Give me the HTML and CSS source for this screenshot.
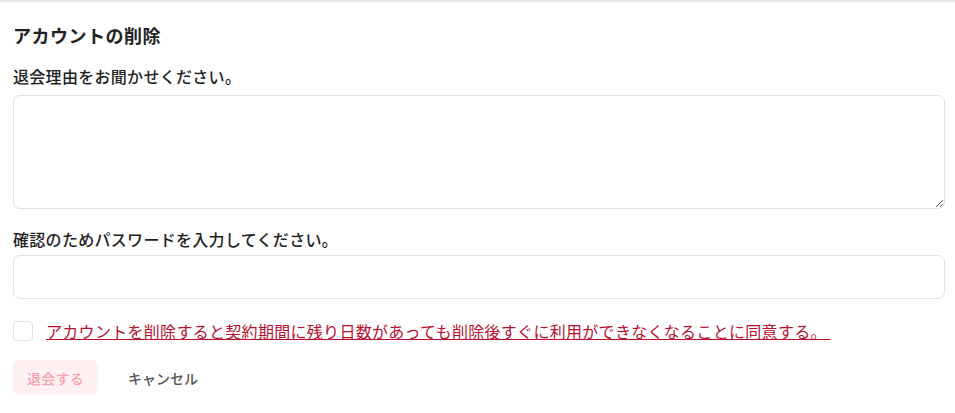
FILE: index.html
```html
<!DOCTYPE html>
<html lang="ja">
<head>
<meta charset="utf-8">
<link rel="stylesheet" href="styles.css">
</head>
<body>
<div class="page">
  <h2 class="title">アカウントの削除</h2>
  <div class="field">
    <label class="label">退会理由をお聞かせください。</label>
    <textarea class="textarea"></textarea>
  </div>
  <div class="field">
    <label class="label">確認のためパスワードを入力してください。</label>
    <input class="input" type="password">
  </div>
  <div class="agree">
    <span class="checkbox"></span>
    <a class="agree-link" href="#">アカウントを削除すると契約期間に残り日数があっても削除後すぐに利用ができなくなることに同意する。 </a>
  </div>
  <div class="actions">
    <button class="btn-danger" disabled>退会する</button>
    <button class="btn-cancel">キャンセル</button>
  </div>
</div>
</body>
</html>
```
FILE: styles.css
```css
* { box-sizing: border-box; }
html, body { margin: 0; padding: 0; background: #fff; }
body {
  font-family: "Noto Sans CJK JP", "Noto Sans", sans-serif;
  color: #222;
  border-top: 2px solid #ece8ea;
}
.page {
  padding: 17px 10px 0 13px;
  display: flex;
  flex-direction: column;
}
.title {
  margin: 0;
  font-size: 18px;
  font-weight: 700;
  line-height: 32px;
  letter-spacing: 0.5px;
}
.field {
  display: flex;
  flex-direction: column;
}
.label {
  font-size: 16px;
  font-weight: 500;
  line-height: 24px;
  letter-spacing: 0.3px;
  margin-top: 13px;
  margin-bottom: 7px;
}
.field + .field .label { margin-top: 18px; margin-bottom: 4px; }
.textarea {
  display: block;
  width: 100%;
  height: 114px;
  border: 1px solid #e2e2e2;
  border-radius: 7px;
  resize: vertical;
  font: inherit;
}
.input {
  display: block;
  width: 100%;
  height: 44px;
  border: 1px solid #e2e2e2;
  border-radius: 7px;
  font: inherit;
}
.agree {
  display: flex;
  align-items: center;
  gap: 13px;
  margin-top: 21px;
}
.checkbox {
  width: 20px;
  height: 20px;
  border: 1px solid #e0e0e0;
  border-radius: 4px;
  flex: none;
}
.agree-link {
  color: #b8102e;
  font-size: 16px;
  letter-spacing: 0.3px;
  line-height: 22px;
  text-decoration: underline;
  white-space: pre;
}
.actions {
  display: flex;
  align-items: center;
  gap: 15px;
  margin-top: 18px;
}
.btn-danger {
  height: 35px;
  width: 85px;
  border: 0;
  border-radius: 6px;
  background: #fff0f2;
  color: #f7a1b1;
  font: inherit;
  font-size: 14px;
  font-weight: 500;
  letter-spacing: 0.2px;
}
.btn-cancel {
  height: 35px;
  padding: 0 15px;
  border: 0;
  background: transparent;
  color: #555;
  font: inherit;
  font-size: 14px;
  font-weight: 500;
  letter-spacing: 0;
}
```
